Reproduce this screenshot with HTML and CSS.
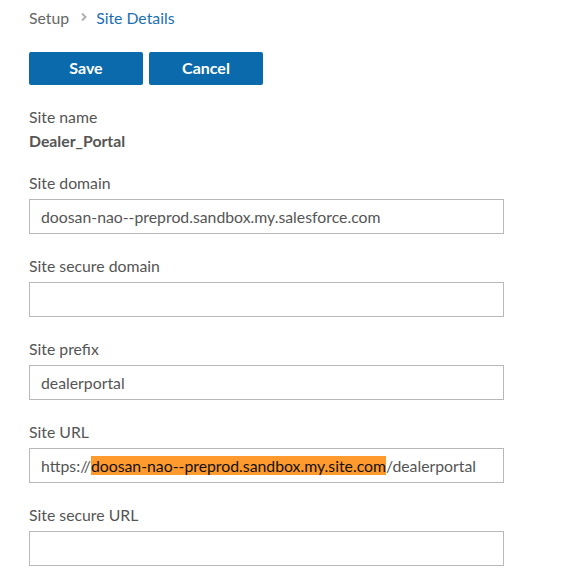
FILE: index.html
```html
<!DOCTYPE html>
<html>
<head>
<meta charset="utf-8">
<link rel="stylesheet" href="styles.css">
</head>
<body>
<div class="page">
  <nav class="crumbs">
    <span class="crumb">Setup</span>
    <svg class="chev" width="8" height="10" viewBox="0 0 8 10"><path d="M2 1.5 L5.5 5 L2 8.5" fill="none" stroke="#b0b0b0" stroke-width="2"/></svg>
    <span class="crumb current">Site Details</span>
  </nav>
  <div class="actions">
    <button class="btn">Save</button>
    <button class="btn">Cancel</button>
  </div>
  <div class="static">
    <div class="label">Site name</div>
    <div class="value">Dealer_Portal</div>
  </div>
  <div class="field">
    <div class="label">Site domain</div>
    <div class="input">doosan-nao--preprod.sandbox.my.salesforce.com</div>
  </div>
  <div class="field">
    <div class="label">Site secure domain</div>
    <div class="input"></div>
  </div>
  <div class="field">
    <div class="label">Site prefix</div>
    <div class="input">dealerportal</div>
  </div>
  <div class="field">
    <div class="label">Site URL</div>
    <div class="input">https://<mark class="hl">doosan-nao--preprod.sandbox.my.site.com</mark>/dealerportal</div>
  </div>
  <div class="field">
    <div class="label">Site secure URL</div>
    <div class="input"></div>
  </div>
</div>
</body>
</html>
```

FILE: styles.css
```css
* { box-sizing: border-box; }
html, body { margin: 0; padding: 0; background: #fff; }
body { font-family: Lato, "Open Sans", sans-serif; font-size: 15.8px; color: #555; }
.page { padding: 7px 0 0 29px; width: 504px; }
.crumbs { display: flex; align-items: center; height: 20px; }
.crumb { color: #666; }
.crumb.current { color: #1b6fb3; }
.chev { margin: 0 8px 0 11px; }
.actions { display: flex; gap: 6px; margin-top: 25px; }
.btn {
  width: 114px; height: 33px; border: none; border-radius: 2px;
  background: #0a6aab; color: #fff; font-family: Lato, sans-serif;
  font-size: 16px; font-weight: bold; padding: 0 0 3px; cursor: pointer;
}
.static { margin-top: 22px; }
.label { line-height: 20px; color: #555; }
.value { font-weight: bold; color: #555; line-height: 20px; margin-top: 4px; }
.field { margin-top: 22px; }
.field .label { margin-bottom: 6px; }
.field + .field { margin-top: 22px; }
.input {
  height: 35px; border: 1px solid #b8b8b8; padding: 0 11px;
  display: flex; align-items: center; color: #555; white-space: nowrap;
}
.hl { background: #ff9a2e; color: #111; padding: 0; }
```
